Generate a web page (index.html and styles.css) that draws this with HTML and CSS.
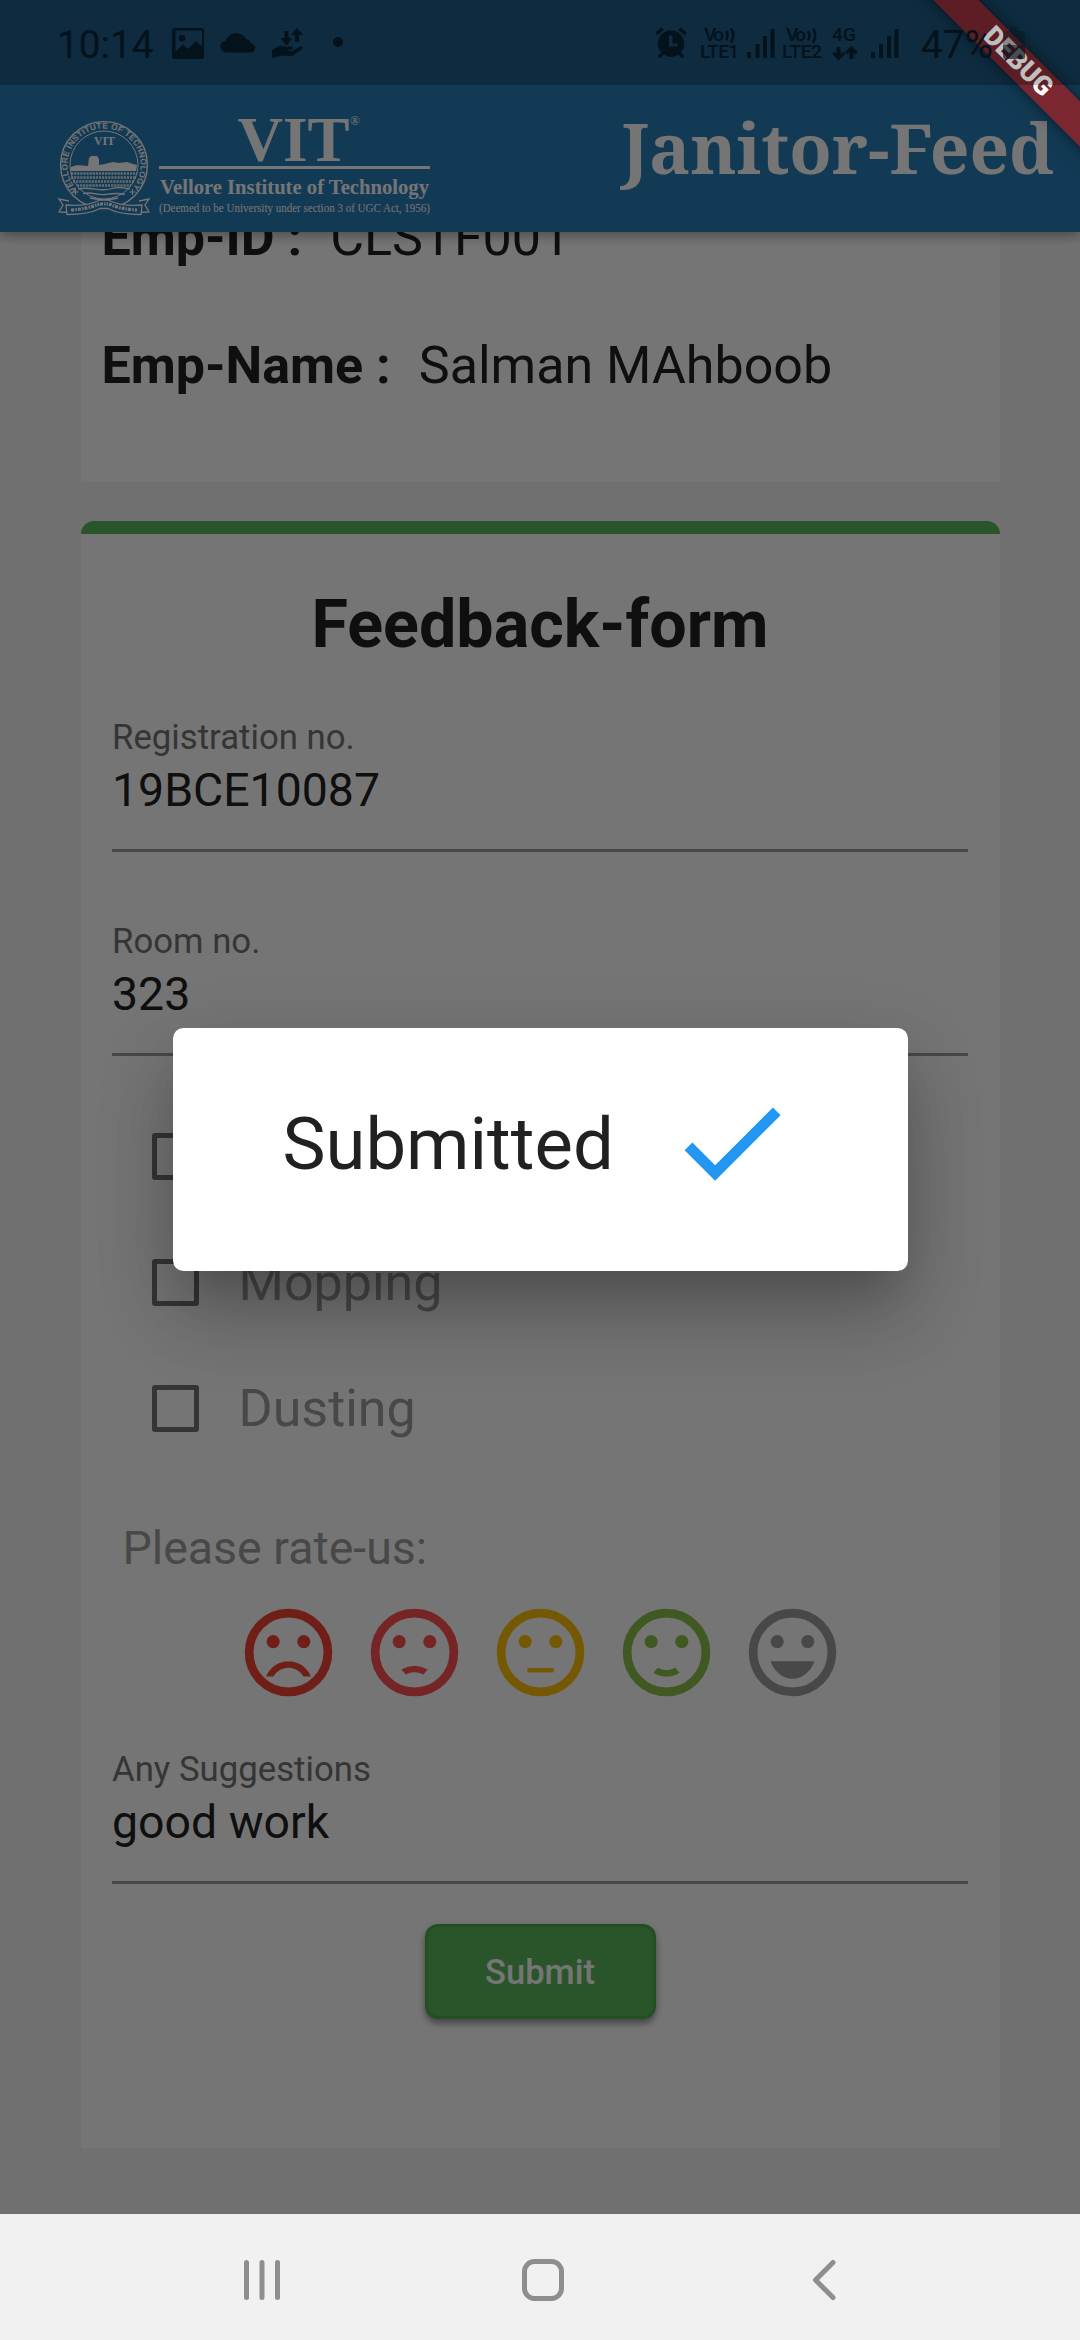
FILE: index.html
```html
<!DOCTYPE html>
<html lang="en">
<head>
<meta charset="utf-8">
<title>Janitor-Feed</title>
<link rel="stylesheet" href="styles.css">
</head>
<body>
<div class="screen">
  <header class="appbar">
    <svg class="brand" viewBox="58 112 374 108" role="img" aria-label="VIT">
      <g fill="none" stroke="#fff">
        <circle cx="104" cy="165" r="43.4" stroke-width="1.4"/>
        <circle cx="104" cy="165" r="34" stroke-width="1"/>
      </g>
      <path id="seal-arc" d="M78.7 191.5A36.6 36.6 0 1 1 129.3 191.5" fill="none"/>
      <text class="seal-ring"><textPath href="#seal-arc" textLength="167" lengthAdjust="spacing" startOffset="2">VELLORE INSTITUTE OF TECHNOLOGY</textPath></text>
      <text class="seal-name" x="94" y="145" textLength="21" lengthAdjust="spacingAndGlyphs">VIT</text>
      <path d="M71 167l6-2 11 1 1-8 2-2h6l2 3v6l6-1 8-2 6 1 8-1 6 2 4 1-1 6H71z" fill="#fff"/>
      <path d="M71 173.500H137M71 177.500H136M73 181.500H134M77 185.500H131" stroke="#fff" stroke-width="2.600" stroke-dasharray="2.200 .9" opacity=".85" fill="none"/>
      <path d="M78 189c12-3 22 3 32 0s14-1 20 0M83 193.500c10-2 14 2 22 1s12-2 20 0M90 198c9 2 20 2 28 0" stroke="#fff" stroke-width="1.300" fill="none"/>
      <path d="M75.500 189v6M72.500 192h6M132.500 189v6M129.500 192h6" stroke="#fff" stroke-width="1.100"/>
      <path d="M69 201l-10-2 4 6-4 7 10 .5M139 201l10-2-4 6 4 7-10 .5" fill="#2b7eb9" stroke="#fff" stroke-width="1.300"/>
      <path d="M66 205q20 2 34-5h8q14 7 34 5l-1 9.500q-22 0-33-6h-8q-11 6-33 6z" fill="#2b7eb9" stroke="#fff" stroke-width="1.300"/>
      <path d="M71 210q17-1 28-6M109 204q11 5 28 6M100 204h8" stroke="#fff" stroke-width="3.200" stroke-dasharray="3 1.200 1.500 1" fill="none"/>
      <text class="brand-name" x="237.500" y="161" textLength="112" lengthAdjust="spacingAndGlyphs">VIT</text>
      <text class="brand-mark" x="350" y="124.500">®</text>
      <rect x="159" y="166" width="271" height="3" fill="#fff"/>
      <text class="brand-full" x="160" y="193.500" textLength="269" lengthAdjust="spacingAndGlyphs">Vellore Institute of Technology</text>
      <text class="brand-note" x="159" y="211.500" textLength="271" lengthAdjust="spacingAndGlyphs">(Deemed to be University under section 3 of UGC Act, 1956)</text>
    </svg>
    <h1 class="app-title">Janitor-Feed</h1>
  </header>

  <main class="content">
    <section class="card employee">
      <p class="employee-row"><b>Emp-ID :</b><span>CLSTF001</span></p>
      <p class="employee-row"><b>Emp-Name :</b><span>Salman MAhboob</span></p>
    </section>
    <section class="card form">
      <h2 class="form-title">Feedback-form</h2>
      <div class="field"><label>Registration no.</label><div class="value">19BCE10087</div></div>
      <div class="field field-room"><label>Room no.</label><div class="value">323</div></div>
      <div class="checks">
        <div class="check"><i></i></div>
        <div class="check"><i></i><span>Mopping</span></div>
        <div class="check"><i></i><span>Dusting</span></div>
      </div>
      <p class="rate-label">Please rate-us:</p>
      <div class="faces">
        <svg class="face awful" viewBox="0 0 24 24"><circle class="ring" cx="12" cy="12" r="9"/><circle cx="8.500" cy="9.500" r="1.500"/><circle cx="15.500" cy="9.500" r="1.500"/><path d="M12 14c-2.330 0-4.320 1.450-5.120 3.500h1.670c.69-1.190 1.970-2 3.450-2s2.750.81 3.450 2h1.670c-.8-2.050-2.790-3.500-5.120-3.500z"/></svg>
        <svg class="face bad" viewBox="0 0 24 24"><circle class="ring" cx="12" cy="12" r="9"/><circle cx="8.500" cy="9.500" r="1.500"/><circle cx="15.500" cy="9.500" r="1.500"/><path d="M9 15.900Q12 14.200 15 15.900L14 17.050Q12 16 10 17.050z"/></svg>
        <svg class="face okay" viewBox="0 0 24 24"><circle class="ring" cx="12" cy="12" r="9"/><circle cx="8.500" cy="9.500" r="1.500"/><circle cx="15.500" cy="9.500" r="1.500"/><path d="M9 15.550h6v1H9z"/></svg>
        <svg class="face good" viewBox="0 0 24 24"><circle class="ring" cx="12" cy="12" r="9"/><circle cx="8.500" cy="9.500" r="1.500"/><circle cx="15.500" cy="9.500" r="1.500"/><path d="M10 15.500Q12 16.600 14 15.500L15 16.600Q12 18.400 9 16.600z"/></svg>
        <svg class="face great" viewBox="0 0 24 24"><circle class="ring" cx="12" cy="12" r="9"/><circle cx="8.500" cy="9.500" r="1.500"/><circle cx="15.500" cy="9.500" r="1.500"/><path d="M12 18c2.280 0 4.220-1.660 5-4H7c.78 2.340 2.720 4 5 4z"/></svg>
      </div>
      <div class="field"><label>Any Suggestions</label><div class="value">good work</div></div>
      <button class="submit">Submit</button>
    </section>
  </main>

  <nav class="navbar">
    <svg class="nav-icon" viewBox="0 0 48 48"><path d="M8.500 6.500v35M24 6.500v35M39.500 6.500v35"/></svg>
    <svg class="nav-icon" viewBox="0 0 48 48"><rect x="5.500" y="5.500" width="37" height="37" rx="10"/></svg>
    <svg class="nav-icon" viewBox="0 0 48 48"><path d="M33 6.500L15.500 24L33 41.500"/></svg>
  </nav>

  <div class="scrim">
    <div class="dialog">
      <span>Submitted</span>
      <svg viewBox="0 0 24 24"><path d="M9 16.170L4.830 12l-1.420 1.410L9 19 21 7l-1.410-1.410z"/></svg>
    </div>
  </div>

  <div class="banner"><span>DEBUG</span></div>

  <div class="statusbar">
    <span class="clock">10:14</span>
    <svg class="left-icons" viewBox="170 20 176 45">
      <path fill-rule="evenodd" d="M175 28h26q3 0 3 3v25q0 3-3 3h-26q-3 0-3-3V31q0-3 3-3zm.500 2.500v21l7.500-7 5 4.500 8-8 6 5.500V30.500zM182 35a3.300 3.300 0 1 1 0 6.600a3.300 3.300 0 0 1 0-6.600z"/>
      <path d="M227 52.500a6 6 0 0 1-1-12a11 11 0 0 1 20-1.500q4 .5 4.500 4q4.500 1 4.500 5q0 4.500-5 4.500z"/>
      <path d="M284.500 31h4v7h4l-6 7.500-6-7.500h4zM295 42h4v-7h4l-6-7-6 7h4zM272 50l7-4q4-1 7 1l6-.5q2 1.500 0 3l-7 .5 7 1 9-5q3 1 0 4l-9 6-10-.5-10 2.500z"/>
      <circle cx="338" cy="42" r="5"/>
    </svg>
    <svg class="right-icons" viewBox="650 20 250 45">
      <path fill-rule="evenodd" d="M671 30.500a13.200 13.200 0 0 1 9.800 22l3.500 3.500-2.300 2.300-3.800-3.700a13.200 13.200 0 0 1-14.400 0l-3.800 3.700-2.300-2.300 3.500-3.500a13.200 13.200 0 0 1 9.800-22zM669 35.500v11h8.500v-3h-5v-8z"/>
      <path d="M656.500 34l6-5.500M685.500 34l-6-5.500" stroke="#04121b" stroke-width="3.500"/>
      <text x="704" y="41" textLength="20">Vo</text>
      <path class="wave" d="M726 31q3 4.500 0 9M731 28.500q4.500 7 0 14"/>
      <text x="700" y="58" textLength="39">LTE1</text>
      <path d="M747 52h4v6h-4zM755.500 44h4v14h-4zM763 36h4v22h-4zM770.500 29h4v29h-4z"/>
      <text x="786" y="41" textLength="20">Vo</text>
      <path class="wave" d="M808 31q3 4.500 0 9M813 28.500q4.500 7 0 14"/>
      <text x="782" y="58" textLength="40">LTE2</text>
      <text x="832" y="41" textLength="24">4G</text>
      <path d="M836.500 47h4v7l2.500-2.500 2 2.500-6.500 6.500-6-6.500 2-2.500 2 2.500zM849.500 59h4v-7l2 2.500 2-2.500-6-6-6.500 6 2 2.500 2.500-2.500z"/>
      <path d="M871 52h4v6h-4zM879 44h4v14h-4zM887 36h4v22h-4zM894.500 29h4v29h-4z"/>
    </svg>
    <span class="percent">47%</span>
    <svg class="battery" viewBox="0 0 22 34"><path opacity=".3" d="M7 1h8v4h5q2 0 2 2v12H0V7q0-2 2-2h5z"/><path opacity=".65" d="M0 19h22v12q0 2-2 2H2q-2 0-2-2z"/></svg>
  </div>
</div>
</body>
</html>
```
FILE: styles.css
```css
* { box-sizing: border-box; }
body { margin: 0; font-family: Roboto, sans-serif; }
h1, h2, p { margin: 0; }

.screen {
  position: relative;
  width: 1080px;
  height: 2340px;
  overflow: hidden;
  display: flex;
  flex-direction: column;
  background: #f5f5f5;
  color: #212121;
}

.appbar {
  flex: none;
  z-index: 1;
  display: flex;
  justify-content: space-between;
  align-items: flex-start;
  height: 232px;
  padding: 112px 26px 0 58px;
  background: #2b7eb9;
  box-shadow: 0 4px 10px rgba(0, 0, 0, .22), 0 2px 14px rgba(0, 0, 0, .16);
  color: #fff;
}
.brand { width: 374px; height: 108px; overflow: visible; }
.brand text { fill: #fff; font-family: "Liberation Serif", serif; }
.brand .seal-ring { font: bold 8.300px "Liberation Sans", sans-serif; }
.brand .seal-name { font-size: 12px; font-weight: bold; }
.brand .brand-name { font-size: 63px; font-weight: bold; }
.brand .brand-mark { font-size: 13px; }
.brand .brand-full { font-size: 22px; font-weight: bold; }
.brand .brand-note { font-size: 11.500px; }
.app-title {
  font: bold 69.300px/80px "Noto Serif", "DejaVu Serif Condensed", "DejaVu Serif", serif;
  font-stretch: condensed;
  margin-top: -5px;
}

.content {
  flex: 1;
  min-height: 0;
  display: flex;
  flex-direction: column;
  gap: 39px;
  padding: 0 80.500px;
}
.card { background: #fff; }
.employee { height: 250px; padding-left: 21px; }
.employee-row {
  display: flex;
  gap: 28px;
  font-size: 52px;
  line-height: 128px;
}
.employee-row:first-child { margin-top: -58px; }

.form {
  display: flex;
  flex-direction: column;
  height: 1627px;
  padding: 45px 31.500px 0;
  border-top: 13px solid #5cb85c;
  border-radius: 13px 13px 0 0;
}
.form-title {
  margin-bottom: 45px;
  font-size: 66.400px;
  line-height: 90px;
  text-align: center;
}
.field { height: 138px; border-bottom: 3px solid #9e9e9e; }
.field label {
  display: block;
  font-size: 34.750px;
  line-height: 46px;
  color: #757575;
}
.field .value { font-size: 46.400px; line-height: 60px; }
.field-room { margin-top: 66px; }

.checks { margin-top: 37px; padding-left: 39.500px; }
.check {
  display: flex;
  align-items: center;
  gap: 40px;
  height: 126px;
  font-size: 52px;
  color: #9e9e9e;
}
.check i {
  width: 47px;
  height: 47px;
  border: 5px solid #757575;
  border-radius: 3px;
}
.rate-label {
  margin: 47px 0 22px 10.500px;
  font-size: 46.500px;
  line-height: 60px;
  color: #9e9e9e;
}
.faces { display: flex; justify-content: center; gap: 21px; margin-bottom: 41px; }
.face { width: 105px; height: 105px; fill: currentColor; }
.face .ring { fill: none; stroke: currentColor; stroke-width: 2; }
.awful { color: #f44336; }
.bad { color: #ff5252; }
.okay { color: #ffc107; }
.good { color: #8bc34a; }
.great { color: #9e9e9e; }
.submit {
  align-self: center;
  width: 231px;
  height: 95px;
  margin-top: 40px;
  padding: 1px 0 0;
  border: 3px solid #4cae4c;
  border-radius: 13px;
  background: #5cb85c;
  box-shadow: 0 5px 6px rgba(0, 0, 0, .32), 0 2px 8px rgba(0, 0, 0, .12);
  color: #fff;
  font: 500 34.600px/1 Roboto, sans-serif;
}

.navbar {
  flex: none;
  z-index: 2;
  display: flex;
  justify-content: space-between;
  align-items: center;
  height: 126px;
  padding: 5px 232px 0 238px;
  background: #f1f1f1;
}
.nav-icon {
  width: 48px;
  height: 48px;
  fill: none;
  stroke: #8e8e8e;
  stroke-width: 5;
  stroke-linecap: round;
  stroke-linejoin: round;
}

.scrim {
  position: absolute;
  inset: 0 0 126px;
  z-index: 1;
  display: grid;
  place-items: center;
  padding-top: 85px;
  background: rgba(0, 0, 0, .54);
}
.dialog {
  display: flex;
  align-items: center;
  width: 735px;
  height: 243px;
  padding: 0 0 14px 110px;
  gap: 52px;
  border-radius: 10.500px;
  background: #fff;
  box-shadow: 0 29px 39px -18px rgba(0, 0, 0, .16), 0 50px 80px 0 rgba(0, 0, 0, .16), 0 24px 80px 8px rgba(0, 0, 0, .1);
  font-size: 72.400px;
}
.dialog span { padding-top: 3px; }
.dialog svg { width: 131px; height: 131px; fill: #2196f3; }

.banner {
  position: absolute;
  top: 46px;
  left: 817.500px;
  z-index: 2;
  width: 400px;
  height: 31.500px;
  transform: rotate(45deg);
  background: rgba(183, 28, 28, .63);
  box-shadow: 0 0 16px rgba(0, 0, 0, .5);
  color: #fff;
  font: 900 26.800px/31.500px Roboto, sans-serif;
  text-align: center;
}

.statusbar {
  position: absolute;
  inset: 0 0 auto;
  z-index: 3;
  display: flex;
  align-items: flex-start;
  height: 85px;
  padding: 20px 0 0 57px;
  background: rgba(0, 0, 0, .25);
  color: #04121b;
  font-size: 38.800px;
  line-height: 49px;
}
.statusbar svg { flex: none; fill: #04121b; }
.clock { width: 113px; }
.left-icons { width: 176px; height: 45px; }
.right-icons { width: 250px; height: 45px; margin-left: 304px; }
.right-icons text { font: 500 19px Roboto, sans-serif; }
.right-icons .wave { fill: none; stroke: #04121b; stroke-width: 2.500; }
.percent { width: 82px; margin-left: 21px; }
.battery { width: 22px; height: 34px; margin-top: 6px; }
```
